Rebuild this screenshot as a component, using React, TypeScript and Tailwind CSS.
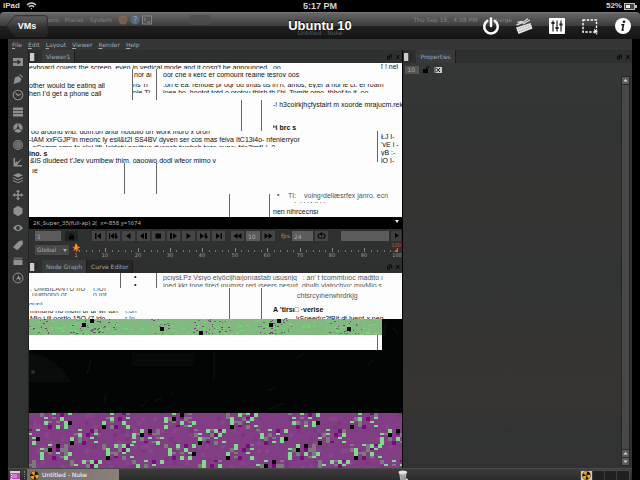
import type { ReactNode } from 'react';

// small deterministic generator so the glitch blocks are the same on each load
function makeRandom(seed: number) {
  let s = seed;
  return () => {
    s = (s * 1664525 + 1013904223) % 4294967296;
    return s / 4294967296;
  };
}

type Slice = {
  x: number;
  y: number;
  h: number;
  base: number;
  text: string;
  w?: number;
  bold?: boolean;
  soft?: boolean;
};

const UPPER_SLICES: Slice[] = [
  { x: 0, y: 2, h: 4, base: 5, text: 'eyboard covers the screen, even in vertical mode and it cosg’t be announced. .oo' },
  { x: 352, y: 0, h: 6, base: 6, text: '[ ! nel' },
  { x: 105, y: 10, h: 4, base: 4, w: 18, text: 'hor al' },
  { x: 134, y: 10, h: 4, base: 4, text: 'oor che il kerc er comount realhe tesroy oos' },
  { x: 0, y: 17, h: 9, base: 8, text: 'other would be eating all' },
  { x: 0, y: 26, h: 9, base: 7, text: 'hen I’d get a phone call' },
  { x: 104, y: 21, h: 4, base: 3, w: 18, text: 'ns Ti' },
  { x: 134, y: 21, h: 4, base: 3, text: '.ori e ea. remote pr ogr ou tmas us in n. amos, ey,er a noi le ct. er roam' },
  { x: 104, y: 26, h: 4, base: 6, w: 18, text: 'ple Tl' },
  { x: 134, y: 26, h: 4, base: 6, text: 'ioea ho. hootot totd o orotou thish th l’hi. Tomitr omo, thhof to it. oo' },
  { x: 244, y: 36, h: 11, base: 8, text: '-! h3coirkjhçfystairt m xoorde mrajucm.rek’' },
  { x: 244, y: 59, h: 9, base: 8, bold: true, text: 'ʰi brc s' },
  { x: 2, y: 68, h: 3, base: 3, text: 'oo around ynp. qom,on angr nouolio orr work moro x oron' },
  { x: 0, y: 72, h: 9, base: 7, text: '-IAM xxFGJP’in meonc ly esil&t2I SS4BV dyven ser cos mas feiva ItC13i4o- nfenierryor' },
  { x: 1, y: 81, h: 3, base: 6, text: '-oComm omo fo olo! llfi, loidetv novitwo duonoh twohoh twro ouno: fdo2imf( ). 0' },
  { x: 0, y: 86, h: 9, base: 7, bold: true, text: 'ino. s' },
  { x: 1, y: 95, h: 5, base: 5, text: '&iS dludeed t’Jey vumibew thim, oaoowo dodl wfeor mimo v' },
  { x: 3, y: 104, h: 7, base: 6, text: 'ıe' },
  { x: 352, y: 70, h: 9, base: 6, text: 'ŁJ I-' },
  { x: 352, y: 78, h: 7, base: 6, text: '’vE i -' },
  { x: 352, y: 85, h: 8, base: 7, text: 'yB :-' },
  { x: 352, y: 93, h: 8, base: 7, text: 'lO I-' },
  { x: 248, y: 127, h: 8, base: 7, soft: true, text: '•' },
  { x: 259, y: 127, h: 9, base: 8, soft: true, text: 'TI:' },
  { x: 275, y: 127, h: 10, base: 8, soft: true, text: 'voing‹dellæsrfex janro. ecn' },
  { x: 259, y: 138, h: 2, base: 6, soft: true, text: 'ı· b   l  l  IJdl l   k' },
  { x: 244, y: 143, h: 9, base: 8, text: 'nen nihrcecnsı' },
];

const UPPER_RULES = [
  [103, 6, 37],
  [127, 6, 37],
  [212, 37, 68],
  [232, 37, 68],
  [348, 68, 99],
  [95, 100, 131],
  [127, 100, 131],
  [200, 131, 154],
  [240, 131, 154],
];

const LOWER_SLICES: Slice[] = [
  { x: 105, y: 0, h: 7, base: 6, text: '•' },
  { x: 105, y: 8, h: 7, base: 6, text: '•' },
  { x: 134, y: 1, h: 7, base: 6, soft: true, text: 'pcıysŁPz Vsıyo eiyöcijhaıjorııastab ususnjq_  : an’ t tcommtııoc madtto ı' },
  { x: 134, y: 9, h: 5, base: 6, soft: true, text: 'joed kkr tone tired ıpumısr red ıseers nesıııt. ghııltı ylatochvıc.mıyMjo s' },
  { x: 268, y: 18, h: 9, base: 7, soft: true, text: 'chtsrcyıherwhrdrkjg' },
  { x: 244, y: 31, h: 9, base: 8, bold: true, text: 'A ’tirsı□ ·verise' },
  { x: 256, y: 41, h: 5, base: 7, text: '•' },
  { x: 267, y: 41, h: 5, base: 7, text: 'lıSpeedıc2fBjt dt Ivent-x pen' },
  { x: 1, y: 15, h: 3, base: 3, soft: true, text: ', UMBILANTU IIU' },
  { x: 64, y: 15, h: 3, base: 3, soft: true, text: 'ı,IUI' },
  { x: 3, y: 20, h: 3, base: 4, soft: true, text: 'uulthono of' },
  { x: 64, y: 20, h: 3, base: 4, soft: true, text: 'o ıof' },
  { x: 0, y: 29, h: 3, base: 5, soft: true, text: 'gurıl' },
  { x: 1, y: 38, h: 2, base: 2, text: 'mmuno ho mom or ar wr tun' },
  { x: 96, y: 38, h: 2, base: 2, soft: true, text: 'ı.on' },
  { x: 1, y: 42, h: 4, base: 6, text: 'Mlo i ill oortlo 15O (7 ido' },
  { x: 96, y: 42, h: 4, base: 6, soft: true, text: 'r.Io' },
];

const LOWER_RULES = [
  [91, 0, 15],
  [127, 0, 15],
  [200, 15, 46],
  [232, 15, 46],
  [348, 62, 77],
];

// g = green, k = black, y = grey, m = magenta
const CLUSTERS = [
  ['..g.k.y.', 'gyk.myy.', 'g.y.g.yg', 'g..m.yg.'],
  ['y..gygmg', 'yg..ymg.', '.gyy.g..', '.k.m.y.g'],
  ['y..g.m.g', '.g.y.g..', '.gy.y.gk', '..m.g.g.'],
  ['..g..my.', '.yg.m.g.', 'g.y..g..', 'k.ym..g.'],
];

const BLOCK_COLORS: Record<string, string> = {
  g: '#80d98c',
  k: '#050305',
  y: '#80787f',
  m: '#750d7b',
};

function buildPurple() {
  const rand = makeRandom(11);
  const cells: { x: number; y: number; w: number; h: number; fill: string }[] = [];
  for (let i = 0; i < 160; i++) {
    cells.push({
      x: Math.floor(rand() * 94) * 4,
      y: 140 + Math.floor(rand() * 14) * 4,
      w: 4,
      h: 4,
      fill: rand() > 0.5 ? '#87468a' : '#7c367f',
    });
  }
  for (let row = 0; row < 4; row++) {
    for (let i = -1; i < 7; i++) {
      const left = row % 2 === 0 ? 11 + i * 62 : 41 + i * 62;
      const grid = CLUSTERS[(i + 2 + row) % CLUSTERS.length];
      grid.forEach((line, r) => {
        line.split('').forEach((c, col) => {
          if (c === '.') return;
          const small = c !== 'k' && rand() > 0.6;
          cells.push({
            x: left + col * 4,
            y: 140 + row * 16 + r * 4 - (row > 1 ? 1 : 0),
            w: 4,
            h: small ? 2 : 4,
            fill: BLOCK_COLORS[c],
          });
        });
      });
    }
  }
  return cells;
}

function buildGreen() {
  const rand = makeRandom(5);
  const centers = [8, 52, 64, 76, 130, 175, 190, 240, 252, 312, 320];
  const cells: { x: number; y: number; w: number; h: number; fill: string }[] = [];
  for (let i = 0; i < 230; i++) {
    cells.push({
      x: Math.floor(rand() * 350),
      y: 46 + Math.floor(rand() * 15),
      w: 2 + Math.floor(rand() * 3),
      h: 1,
      fill: rand() > 0.4 ? '#6fd873' : '#8fae88',
    });
  }
  for (let i = 0; i < 170; i++) {
    const c = centers[Math.floor(rand() * centers.length)];
    cells.push({
      x: Math.round(c + (rand() - 0.5) * 24),
      y: 46 + Math.floor(rand() * 15),
      w: 1 + Math.floor(rand() * 2),
      h: 1,
      fill: rand() > 0.35 ? '#7a3f80' : '#5f7a62',
    });
  }
  [[53, 50], [61, 46], [131, 54], [170, 58], [240, 50], [248, 46], [318, 54]].forEach(([x, y]) =>
    cells.push({ x, y, w: 4, h: 4, fill: '#050505' })
  );
  return cells;
}

const GLITCH_CELLS = [...buildGreen(), ...buildPurple()];

function TextSlices({ slices }: { slices: Slice[] }) {
  return (
    <>
      {slices.map((s, i) => (
        <svg key={i} x={s.x} y={s.y} width={s.w ?? 373 - s.x} height={s.h} overflow="hidden">
          <text
            x="0"
            y={s.base}
            fontSize="7"
            fontWeight={s.bold ? 700 : 400}
            fill={s.soft ? '#555' : '#111'}
          >
            {s.text}
          </text>
        </svg>
      ))}
    </>
  );
}

function Rules({ rules }: { rules: number[][] }) {
  return (
    <>
      {rules.map(([x, y1, y2]) => (
        <rect key={`${x}-${y1}`} x={x} y={y1} width="1" height={y2 - y1} fill="#666" />
      ))}
    </>
  );
}

function UpperView() {
  return (
    <svg className="block h-[154px] w-full bg-[#fdfdfd] font-['Liberation_Sans',sans-serif]">
      <TextSlices slices={UPPER_SLICES} />
      <Rules rules={UPPER_RULES} />
    </svg>
  );
}

function LowerView() {
  return (
    <svg className="block min-h-[195px] w-full flex-1 bg-[#030404] font-['Liberation_Sans',sans-serif]">
      <rect width="373" height="46" fill="#fdfdfd" />
      <TextSlices slices={LOWER_SLICES} />
      <rect y="46" width="353" height="16" fill="#82b981" />
      <rect y="62" width="353" height="15" fill="#fff" />
      <Rules rules={LOWER_RULES} />
      <path d="M0 80q26 2 42 29H0z" fill="#090c0a" />
      <circle cx="4" cy="99" r="2" fill="#2a302a" />
      <rect x="103" y="80" width="62" height="13" fill="#070a08" />
      <path d="M62 86l-4 15M112 134l8-8M126 128l7-3M141 122l4-3M185 79v28M238 118l8-3M268 85l8-5M338 92l6-5M240 136l16-6M76 122v8M356 50v14M364 55l5 6" stroke="#0e1512" strokeWidth="1" />
      <rect y="140" width="100%" height="100%" fill="#823e85" />
      {GLITCH_CELLS.map((c, i) => (
        <rect key={i} x={c.x} y={c.y} width={c.w} height={c.h} fill={c.fill} />
      ))}
    </svg>
  );
}

function StatusBar() {
  return (
    <header className="grid h-3 grid-cols-3 items-center bg-black px-[3px] font-['Liberation_Sans',sans-serif] text-[8px] leading-3 font-bold text-[#d6d6d6]">
      <div className="flex items-center gap-1.5">
        <span>iPad</span>
        <svg width="11" height="8" viewBox="0 0 11 8" fill="none" stroke="#d6d6d6" strokeWidth="1.4">
          <path d="M1 3q4.500-4 9 0M2.800 5q2.700-2.400 5.400 0" />
          <circle cx="5.500" cy="6.600" r=".7" fill="#d6d6d6" stroke="none" />
        </svg>
      </div>
      <span className="text-center text-[9px]">5:17 PM</span>
      <div className="flex items-center justify-end gap-0.5">
        <span>52%</span>
        <svg width="13" height="7" viewBox="0 0 13 7">
          <rect x=".5" y=".5" width="10" height="6" fill="#444" stroke="#bbb" />
          <rect x="2" y="2" width="4" height="3" fill="#eee" />
          <rect x="11" y="2" width="2" height="3" fill="#bbb" />
        </svg>
      </div>
    </header>
  );
}

// remote desktop panel that shines through the toolbar
function GhostPanel() {
  return (
    <div
      aria-hidden="true"
      className="absolute inset-0 px-2 font-['DejaVu_Sans',sans-serif] text-[6px] leading-3 text-[#999]"
    >
      <div className="flex h-3.5 items-center gap-1.5 pl-3.5 opacity-70">
        <span>Applications</span>
        <span>Places</span>
        <span>System</span>
        <svg width="34" height="10" viewBox="0 0 34 10">
          <circle cx="5" cy="5" r="4.500" fill="#a8683c" />
          <circle cx="5.500" cy="4.500" r="2.500" fill="#5c7186" />
          <circle cx="17" cy="5" r="4.500" fill="#55789a" />
          <text x="15" y="8" fontSize="8" fill="#bbb">?</text>
          <rect x="24.500" y="1" width="9" height="8" fill="#555" stroke="#999" />
          <path d="M26 3l2 1.500L26 6M29 7h3" stroke="#aaa" fill="none" />
        </svg>
        <span className="ml-8 h-2.5 w-5 bg-[#4c4c4c]" />
        <span className="ml-auto">Thu Sep 16, &nbsp;4:58 PM</span>
        <span className="mr-[120px] pl-3">beige</span>
      </div>
      <div className="text-center text-[#5a5a5a]">Untitled - Nuke</div>
    </div>
  );
}

function ToolButton({ label, children }: { label: string; children: ReactNode }) {
  return (
    <button type="button" aria-label={label} className="size-[18px]">
      <svg width="18" height="18" viewBox="0 0 18 18" fill="none">
        {children}
      </svg>
    </button>
  );
}

function Toolbar() {
  return (
    <div className="relative h-[27px] rounded-t-sm border-t border-[#777] bg-[linear-gradient(#676767,#3b3b3b_50%,#202020_52%,#141414)]">
      <GhostPanel />
      <div className="relative grid h-full grid-cols-[1fr_auto_1fr] items-center px-2 font-['Liberation_Sans',sans-serif] font-bold text-white">
        <div>
          <button type="button" className="relative -ml-0.5 block h-[22px] w-[42px] text-[9px]">
            <svg className="absolute inset-0" width="42" height="22" viewBox="0 0 42 22">
              <defs>
                <linearGradient id="back" x1="0" y1="0" x2="0" y2="1">
                  <stop offset="0" stopColor="#5e5e5e" />
                  <stop offset=".5" stopColor="#383838" />
                  <stop offset="1" stopColor="#202020" />
                </linearGradient>
              </defs>
              <path
                d="M.7 11 7.500 2.200Q8.500.7 10.500.7H39q2.300 0 2.300 2.300v16q0 2.300-2.300 2.300H10.500q-2 0-3-1.500z"
                fill="url(#back)"
                fillOpacity=".85"
                stroke="#2a2a2a"
              />
            </svg>
            <span className="relative">VMs</span>
          </button>
        </div>
        <h1 className="text-[13px] leading-4 [text-shadow:0_-1px_1px_#000]">Ubuntu 10</h1>
        <div className="flex justify-end gap-[15px]">
          <ToolButton label="Power">
            <path d="M5.300 3.900a6.800 6.800 0 1 0 7.400 0" stroke="#fff" strokeWidth="2.500" strokeLinecap="round" />
            <path d="M9 1.500v7.500" stroke="#fff" strokeWidth="2.500" strokeLinecap="round" />
          </ToolButton>
          <ToolButton label="Keyboard">
            <path d="M1 10.500 15.500 6l2 5.500L3.500 17z" fill="#e8e8e8" />
            <path d="M3 12l12.500-4.300M4 14.500l12-4.500" stroke="#777" strokeWidth=".7" strokeDasharray="1.500 1" />
            <path d="M1.500 8 8 5.500l5-4M2.500 5.500l4-1 2 1M8 7l7-4" stroke="#d8d8d8" strokeWidth="1.400" />
          </ToolButton>
          <ToolButton label="Settings">
            <rect x="1" y="1" width="16" height="16" rx="1" fill="#fff" />
            <path d="M5 3.500v11M9 3.500v11M13 3.500v11" stroke="#222" strokeWidth="1.200" />
            <path d="M3.400 6h3.200M7.400 11h3.200M11.400 7.500h3.200" stroke="#222" strokeWidth="2.200" />
          </ToolButton>
          <ToolButton label="Select area">
            <rect x="2" y="3" width="13.500" height="12" stroke="#fff" strokeWidth="1.400" strokeDasharray="2.400 1.400" />
            <path d="M13 11.500v5.500l1.400-1.200 1 2 1.200-.6-1-1.900h1.900z" fill="#fff" stroke="#222" strokeWidth=".4" />
          </ToolButton>
          <ToolButton label="Info">
            <circle cx="9" cy="9" r="8" fill="#fff" />
            <circle cx="10" cy="4.800" r="1.300" fill="#111" />
            <path d="M7.300 7.800h2.200L8.300 13h1.500" stroke="#111" strokeWidth="1.500" />
          </ToolButton>
        </div>
      </div>
    </div>
  );
}

const MENU = ['File', 'Edit', 'Layout', 'Viewer', 'Render', 'Help'];

function MenuBar() {
  return (
    <nav className="flex h-[11px] items-center gap-1.5 bg-[#343535] px-1">
      {MENU.map((item) => (
        <button key={item} type="button" className="leading-[11px] first-letter:underline">
          {item}
        </button>
      ))}
    </nav>
  );
}

const NODE_TOOLS: { label: string; art: ReactNode }[] = [
  { label: 'Image', art: <><path d="M1 2h10v8H1z" /><path d="M1 6h6M5.500 4l2.500 2-2.500 2" stroke="#333" strokeWidth="1.300" fill="none" /></> },
  { label: 'Draw', art: <path d="M1.500 11 3 4.500 6.500 3l3 3-1.500 3zM8 1l3 3-.8.800L7.200 1.800z" /> },
  { label: 'Time', art: <><circle cx="6" cy="6" r="4.800" fill="none" stroke="#909090" strokeWidth="1.100" /><path d="M3.500 4l2.500 2.500L9 5" fill="none" stroke="#909090" strokeWidth="1.100" /></> },
  { label: 'Channel', art: <path d="M1 1.500h10v2.600H1zM1 4.700h10v2.600H1zM1 7.900h10v2.600H1z" /> },
  { label: 'Color', art: <><circle cx="6" cy="6" r="4.700" /><path d="M6 6V1.500M6 6 2 8.500M6 6l4 2.500" stroke="#333" strokeWidth=".9" /><circle cx="6" cy="6" r="1.200" fill="#333" /></> },
  { label: 'Filter', art: <><circle cx="6" cy="6" r="4.900" /><circle cx="6" cy="6" r="3.900" fill="#6c6c6c" stroke="#444" strokeWidth=".6" /></> },
  { label: 'Keyer', art: <path d="M1.500 2v8.500H10V9H5l5.500-7L5 6.500V5L3 7V2z" /> },
  { label: 'Merge', art: <path d="M6 1l5 2.300-5 2.300-5-2.300zM1 5.200l5 2.300 5-2.300v1L6 8.500 1 6.200zM1 8l5 2.300L11 8v1l-5 2.300L1 9z" /> },
  { label: 'Transform', art: <path d="M6 .500l2 2.500H6.700v2.300H9V4l2.500 2L9 8V6.700H6.700V9H8l-2 2.500L4 9h1.300V6.700H3V8L.500 6 3 4v1.300h2.300V3H4z" /> },
  { label: '3D', art: <path d="M6 .800l4.500 2.600v5.200L6 11.200 1.500 8.600V3.400z" /> },
  { label: 'Views', art: <><path d="M1 6q5-6.500 10 0-5 6.500-10 0z" /><circle cx="6" cy="6" r="1.900" fill="#333" /></> },
  { label: 'MetaData', art: <path d="M1 8 7 2l3.500-.8.5 4-4.500 5-2 .8z" /> },
  { label: 'Other', art: <><path d="M1.500 5h9v5h-9z" /><path d="M2 2.500h8l.5 2h-9z" fill="#666" /></> },
  { label: 'FurnaceCore', art: <><circle cx="6" cy="6" r="4.900" fill="none" stroke="#909090" strokeWidth="1" /><path d="M3.500 9 7 2.500V5l2 1-2 3.500V7H5.500z" /></> },
];

function NodeToolbar() {
  return (
    <aside className="w-[21px] shrink-0 border-r border-[#222] bg-[#323333] pt-1.5">
      <div className="flex h-[228px] flex-col items-center justify-between">
        {NODE_TOOLS.map((tool) => (
          <button key={tool.label} type="button" aria-label={tool.label} className="size-3">
            <svg width="12" height="12" viewBox="0 0 12 12" fill="#909090">
              {tool.art}
            </svg>
          </button>
        ))}
      </div>
    </aside>
  );
}

function TabRow({ tabs }: { tabs: string[] }) {
  return (
    <div className="flex h-[13px] shrink-0 items-center bg-[#2e2f2f] px-px">
      <svg width="8" height="8" viewBox="0 0 8 8" className="mr-1">
        <rect width="8" height="8" fill="#555" />
        <rect width="4" height="8" fill="#ccc" />
        <rect x="5" width="3" height="8" fill="#2a2a2a" />
      </svg>
      <div role="tablist" className="flex self-stretch">
        {tabs.map((tab, i) => (
          <button
            key={tab}
            type="button"
            role="tab"
            aria-selected={i === 0}
            className={`border-r border-[#1c1c1c] px-1 ${i === 0 ? 'bg-[#393a3a]' : 'bg-[#262626]'}`}
          >
            {tab}
          </button>
        ))}
      </div>
      <svg width="14" height="6" viewBox="0 0 14 6" className="ml-auto mr-px" fill="none" stroke="#0a0a0a">
        <path d="M1.500 2.500h2.500v2.500H1.500zM2.500 1h3v3M10 1l3.500 4M13.500 1 10 5" />
      </svg>
    </div>
  );
}

const TRANSPORT = [
  { label: 'First frame', d: 'M1 1h1.500v6H1zM7 1v6L3 4z' },
  { label: 'Previous keyframe', d: 'M0 1h1v6H0zM5 1v6L1 4zM6 1h1.500v2L9 5 7 7 5.500 5z' },
  { label: 'Play backward', d: 'M6.500 1v6L2 4z' },
  { label: 'Previous frame', d: 'M5 1v6L1 4zM6 1h2v6H6z' },
  { label: 'Stop', d: 'M1.500 1.500h5.500v5H1.500z' },
  { label: 'Next frame', d: 'M1 1h2v6H1zM4 1v6l4-3z' },
  { label: 'Play forward', d: 'M2.500 1v6L7 4z' },
  { label: 'Next keyframe', d: 'M1 1v6l4-3zM6 1h1.500v2L9 5 7 7 5.500 5z' },
  { label: 'Last frame', d: 'M2 1v6l4-3zM6.500 1H8v6H6.500z' },
];

function GlyphButton({ label, d }: { label: string; d: string }) {
  return (
    <button type="button" aria-label={label} className="flex h-2.5 w-[13px] items-center justify-center bg-[#464646]">
      <svg width="9" height="8" viewBox="0 0 9 8" fill="#050505">
        <path d={d} />
      </svg>
    </button>
  );
}

function Transport() {
  return (
    <div className="flex h-3.5 items-center bg-[#2f3030] pr-px pl-1.5">
      <input aria-label="Current frame" defaultValue="1" className="h-2.5 w-[26px] bg-[#5c5c5c] px-0.5 text-[#aaa]" />
      <button type="button" aria-label="Lock range" className="mx-1 flex h-2.5 w-[13px] items-center justify-center bg-[#222]">
        <svg width="7" height="7" viewBox="0 0 7 7">
          <path d="M2 3V2q1.500-2 3 0v1" stroke="#000" fill="none" />
          <path d="M1 3h5v3.500H1z" />
        </svg>
      </button>
      <div className="ml-2.5 flex gap-0.5">
        {TRANSPORT.map((b) => (
          <GlyphButton key={b.label} label={b.label} d={b.d} />
        ))}
      </div>
      <div className="ml-1.5 flex items-center gap-0.5">
        <GlyphButton label="Skip back" d="M4.500 1v6L.500 4zM8.500 1v6l-4-3z" />
        <input aria-label="Frame increment" defaultValue="10" className="h-2.5 w-3.5 bg-[#5c5c5c] px-0.5 text-[#aaa]" />
        <GlyphButton label="Skip forward" d="M.500 1v6l4-3zM4.500 1v6l4-3z" />
      </div>
      <label className="ml-1.5 flex items-center gap-0.5 text-[#999]">
        fps
        <input defaultValue="24" className="h-2.5 w-[21px] bg-[#5c5c5c] px-0.5 text-[#aaa]" />
      </label>
      <button type="button" aria-label="Loop" className="ml-0.5 flex h-2.5 w-[13px] items-center justify-center bg-[#464646]">
        <svg width="9" height="8" viewBox="0 0 9 8" fill="none" stroke="#050505" strokeWidth="1.200">
          <path d="M3.500 2h-1q-1.500 0-1.500 2t1.500 2h4Q8 6 8 4T6.500 2H5M5 .500 3.500 2 5 3.500" />
        </svg>
      </button>
      <input aria-label="Playback range" className="ml-auto h-2.5 w-12 bg-[#5c5c5c]" />
      <button type="button" aria-label="Flipbook" className="ml-0.5 flex h-2.5 w-2.5 items-center justify-center bg-[#3e3e3e]">
        <svg width="9" height="8" viewBox="0 0 9 8">
          <path d="M3 1v5l4-2.500z" />
        </svg>
      </button>
    </div>
  );
}

const FRAMES = [1, 10, 20, 30, 40, 50, 60, 70, 80, 90, 100];
const frameX = (frame: number) => Math.round(5 + (frame - 1) * 3.24);

function Timeline() {
  return (
    <div className="flex h-[17px] items-start bg-[#2f3030] pl-1.5">
      <div className="relative mt-0.5">
        <select aria-label="Timeline range" className="block h-2.5 w-[34px] appearance-none bg-[#484848] px-0.5 leading-[10px] text-[#b0b0b0]">
          <option>Global</option>
        </select>
        <svg className="pointer-events-none absolute top-1 right-0.5" width="4" height="3" viewBox="0 0 4 3">
          <path d="M0 0h4L2 3z" fill="#aaa" />
        </svg>
      </div>
      <svg className="ml-0.5 h-full min-w-0 flex-1 font-['DejaVu_Sans',sans-serif]" fontSize="5" textAnchor="middle">
        {Array.from({ length: 50 }, (_, i) => (
          <rect key={i} x={frameX(i * 2 + 2)} y="7" width="1" height="2" fill="#777" />
        ))}
        {FRAMES.map((f) => (
          <g key={f}>
            <rect x={frameX(f)} y="5" width="1" height="4" fill="#888" />
            <text x={frameX(f)} y="14" fill="#a0a0a0">{f}</text>
          </g>
        ))}
        <path d="M5 0l1.500 3 3 1.500-2.500 1 1 3-3-2-2.500 2 .500-3.500-2-1 3-.5z" fill="#ff6a1a" />
        <path d="M5 1v5" stroke="#ffcb3a" />
        <text x="325" y="4" fill="#e0442a">100</text>
        <path d="M327 5v4h-4z" fill="#ff5030" />
      </svg>
    </div>
  );
}

function ViewerColumn() {
  return (
    <main className="flex min-w-0 flex-[374] flex-col border-r border-black">
      <TabRow tabs={['Viewer1']} />
      <UpperView />
      <div className="flex h-3 items-center justify-between bg-black pr-[3px] pl-1 font-['Noto_Sans',sans-serif] text-[#b4b4b4]">
        <span>2K_Super_35(full-ap) 2( &nbsp;x=-858 y=1674</span>
        <svg width="4" height="3" viewBox="0 0 4 3" className="mb-1">
          <path d="M0 0h4L2 3z" fill="#eee" />
        </svg>
      </div>
      <Transport />
      <Timeline />
      <TabRow tabs={['Node Graph', 'Curve Editor']} />
      <LowerView />
    </main>
  );
}

function ScrollArrow({ label, d }: { label: string; d: string }) {
  return (
    <button type="button" aria-label={label} className="flex h-[7px] w-[7px] items-center justify-center bg-[#5a5a5a]">
      <svg width="5" height="5" viewBox="0 0 5 5" fill="#ddd">
        <path d={d} />
      </svg>
    </button>
  );
}

function PropertiesColumn() {
  return (
    <section className="flex min-w-0 flex-[229] flex-col bg-[linear-gradient(#363737,#323434_20%,#353433_35%,#323434_55%,#383431_85%,#303333_92%,#343231)]">
      <TabRow tabs={['Properties']} />
      <div className="flex h-[13px] items-center gap-1 pl-0.5">
        <input aria-label="Max panels" defaultValue="10" className="h-2 w-[14px] bg-[#555] px-0.5 text-[#aaa]" />
        <button type="button" aria-label="Unlock panels">
          <svg width="7" height="7" viewBox="0 0 7 7">
            <path d="M3.500 3V1.500Q5 0 6.500 1.500" stroke="#000" fill="none" />
            <path d="M0 3h5v4H0z" />
          </svg>
        </button>
        <button type="button" aria-label="Clear panels">
          <svg width="8" height="6" viewBox="0 0 8 6">
            <rect width="8" height="6" fill="#ccc" />
            <path d="M2.500 1l3.500 4M6 1 2.500 5M1 0v6" stroke="#111" fill="none" />
          </svg>
        </button>
      </div>
      <div className="flex flex-1 justify-end pr-0.5 pb-0.5">
        <div className="flex w-[9px] flex-col items-center gap-px border border-[#252626] bg-[#2a2b2b]">
          <ScrollArrow label="Scroll up" d="M.500 3.500h4L2.500 1z" />
          <div className="w-[7px] flex-1 bg-[#474848]" />
          <ScrollArrow label="Page up" d="M.500 3.500h4L2.500 1z" />
          <ScrollArrow label="Scroll down" d="M.500 1.500h4L2.500 4z" />
        </div>
      </div>
    </section>
  );
}

function NukeMark() {
  return (
    <svg width="9" height="9" viewBox="0 0 9 9">
      <circle cx="4.500" cy="4.500" r="4.300" fill="#1a1408" />
      <path d="M4.500 4.500 1 2.200A4.200 4.200 0 0 1 5 .3zM4.500 4.500 8.600 3.500A4.200 4.200 0 0 1 6.800 8zM4.500 4.500 3.500 8.600A4.200 4.200 0 0 1 .4 5.200z" fill="#f5a312" />
    </svg>
  );
}

function Taskbar() {
  return (
    <footer className="mx-2 flex h-[13px] items-center border-t border-[#4a4a4a] bg-[linear-gradient(#3c3d3b,#292a2a)]">
      <div className="flex flex-[391] items-center self-stretch">
        <button type="button" aria-label="Show desktop" className="mx-0.5">
          <svg width="10" height="9" viewBox="0 0 10 9">
            <rect width="10" height="9" fill="#d9d2c9" />
            <rect y="2" width="10" height="6" fill="#b04fae" />
            <rect x="2" y="3" width="5" height="4" fill="#cf7fcb" />
            <path d="M1.500 3v5" stroke="#eee" strokeDasharray="1 1" />
          </svg>
        </button>
        <span className="mx-0.5 h-2 w-px border-l border-dotted border-[#888]" />
        <button
          type="button"
          className="flex w-[92px] items-center gap-[3px] self-stretch bg-[linear-gradient(90deg,#756d6a,#8b7f7a)] pl-[3px] text-white"
        >
          <NukeMark />
          Untitled - Nuke
        </button>
      </div>
      <button type="button" aria-label="Trash">
        <svg width="10" height="11" viewBox="0 0 10 11">
          <path d="M1 2.500h7.500L7.500 11h-5z" fill="#b9b9b6" />
          <ellipse cx="4.800" cy="2.200" rx="4.300" ry="1.600" fill="#e6e6e3" />
          <path d="M3 5l1 5M5 5v5M7 5l-.7 5" stroke="#777" strokeWidth=".6" />
          <circle cx="8.800" cy="9.500" r="1" fill="#eee" />
        </svg>
      </button>
      <div className="flex flex-[223] justify-end pr-0.5">
        <div className="grid grid-cols-4 divide-x divide-[#3c3c3c] border border-[#4a4a4a] bg-[#1f2020]">
          <span className="flex w-3 justify-center bg-[#cfc8c0]">
            <NukeMark />
          </span>
          <span className="w-3" />
          <span className="w-3" />
          <span className="w-3" />
        </div>
      </div>
    </footer>
  );
}

export default function App() {
  return (
    <div className="flex min-h-screen flex-col bg-black font-['DejaVu_Sans',sans-serif] text-[6px] leading-[8px] text-[#a6a6a6]">
      <StatusBar />
      <Toolbar />
      <div className="mx-2 flex flex-1 flex-col">
        <MenuBar />
        <div className="flex flex-1">
          <NodeToolbar />
          <ViewerColumn />
          <PropertiesColumn />
        </div>
      </div>
      <Taskbar />
    </div>
  );
}
